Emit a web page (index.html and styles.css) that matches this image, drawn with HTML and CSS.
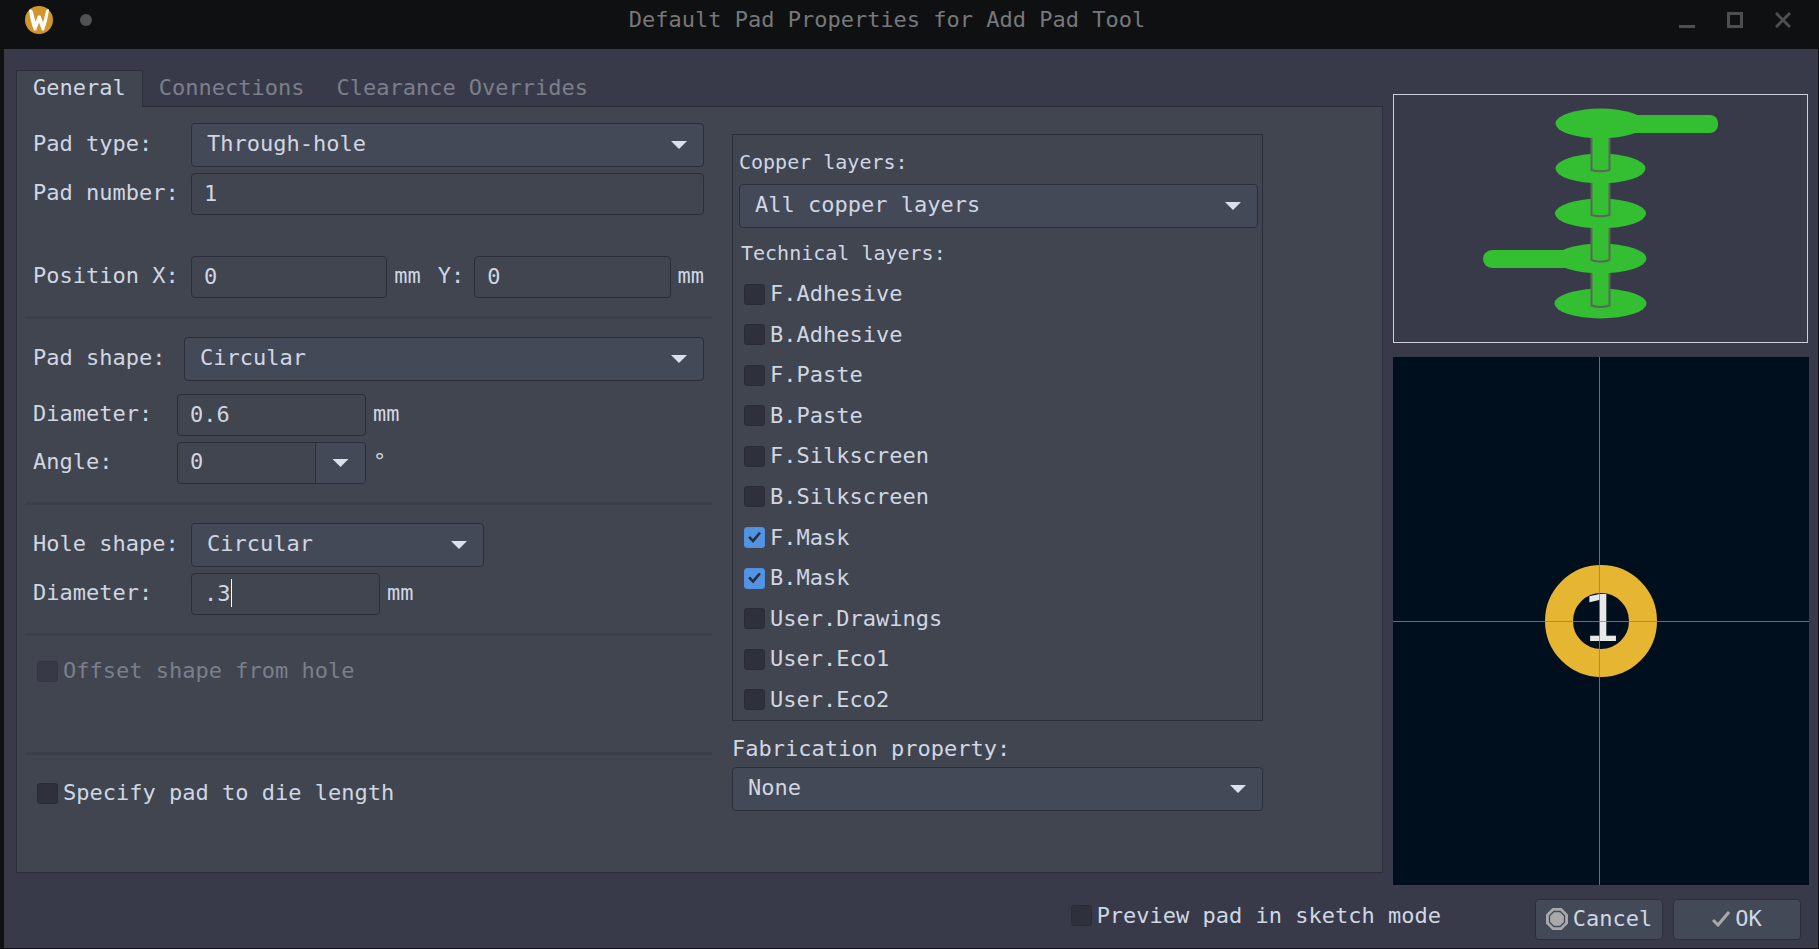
FILE: index.html
```html
<!DOCTYPE html>
<html lang="en">
<head>
<meta charset="utf-8">
<title>Default Pad Properties for Add Pad Tool</title>
<link rel="stylesheet" href="styles.css">
</head>
<body>
<header class="titlebar">
  <div class="titlebar-left">
    <svg class="logo" viewBox="0 0 28 28" aria-hidden="true"><circle cx="14" cy="14" r="14" fill="#d1962c"/><path d="M4 4C6 3 7.500 4 8 6L10.500 16L13 9.500H15.500L18 16.500L21 5C21.500 3.500 22.500 3 24 3.500C23 11 21.500 18 19 24.500H17L14 16.500L11 24.500H9C6.500 18 5 12 4 4Z" fill="#fff"/></svg>
    <span class="dot"></span>
  </div>
  <h1 class="title">Default Pad Properties for Add Pad Tool</h1>
  <div class="titlebar-right">
    <button class="win-btn" aria-label="Minimize"><svg viewBox="0 0 16 16"><path d="M0 14.500H16" stroke-width="3"/></svg></button>
    <button class="win-btn" aria-label="Maximize"><svg viewBox="0 0 16 16"><path d="M1.500 1.500H14.500V14.500H1.500Z" stroke-width="3"/></svg></button>
    <button class="win-btn" aria-label="Close"><svg viewBox="0 0 16 16"><path d="M1 1L15 15M15 1L1 15" stroke-width="3"/></svg></button>
  </div>
</header>

<main class="dialog">
  <div class="content">
    <div class="notebook">
      <div class="tabs" role="tablist">
        <button class="tab active" role="tab" aria-selected="true">General</button>
        <button class="tab" role="tab" aria-selected="false">Connections</button>
        <button class="tab" role="tab" aria-selected="false">Clearance Overrides</button>
      </div>
      <div class="panel">
        <form class="settings">
          <section class="group">
            <div class="row">
              <label class="label" for="pad-type">Pad type:</label>
              <div class="select grow"><select id="pad-type"><option>Through-hole</option></select></div>
            </div>
            <div class="row">
              <label class="label" for="pad-number">Pad number:</label>
              <input class="field grow" id="pad-number" type="text" value="1">
            </div>
            <div class="row position">
              <label class="label" for="pos-x">Position X:</label>
              <input class="field grow" id="pos-x" type="text" value="0">
              <span class="unit">mm</span>
              <label class="label-y" for="pos-y">Y:</label>
              <input class="field grow" id="pos-y" type="text" value="0">
              <span class="unit">mm</span>
            </div>
          </section>
          <section class="group">
            <div class="row shape">
              <label class="label medium" for="pad-shape">Pad shape:</label>
              <div class="select grow"><select id="pad-shape"><option>Circular</option></select></div>
            </div>
            <div class="row">
              <label class="label narrow" for="pad-diameter">Diameter:</label>
              <input class="field sized" id="pad-diameter" type="text" value="0.6">
              <span class="unit">mm</span>
            </div>
            <div class="row">
              <label class="label narrow" for="angle">Angle:</label>
              <div class="combo sized">
                <input id="angle" type="text" value="0">
                <button class="combo-btn" type="button" aria-label="Choose angle"></button>
              </div>
              <span class="unit">°</span>
            </div>
          </section>
          <section class="group">
            <div class="row">
              <label class="label" for="hole-shape">Hole shape:</label>
              <div class="select hole"><select id="hole-shape"><option>Circular</option></select></div>
            </div>
            <div class="row">
              <label class="label" for="hole-diameter">Diameter:</label>
              <div class="edit sized">
                <input class="field" id="hole-diameter" type="text" value=".3">
                <span class="caret"></span>
              </div>
              <span class="unit">mm</span>
            </div>
          </section>
          <section class="group offset">
            <label class="check disabled"><input type="checkbox" disabled>Offset shape from hole</label>
          </section>
          <section class="group die">
            <label class="check"><input type="checkbox">Specify pad to die length</label>
          </section>
        </form>

        <div class="layers-column">
          <div class="layers">
            <label class="caption" for="copper">Copper layers:</label>
            <div class="select"><select id="copper"><option>All copper layers</option></select></div>
            <p class="caption technical">Technical layers:</p>
            <div class="layer-list">
              <label class="check"><input type="checkbox">F.Adhesive</label>
              <label class="check"><input type="checkbox">B.Adhesive</label>
              <label class="check"><input type="checkbox">F.Paste</label>
              <label class="check"><input type="checkbox">B.Paste</label>
              <label class="check"><input type="checkbox">F.Silkscreen</label>
              <label class="check"><input type="checkbox">B.Silkscreen</label>
              <label class="check"><input type="checkbox" checked>F.Mask</label>
              <label class="check"><input type="checkbox" checked>B.Mask</label>
              <label class="check"><input type="checkbox">User.Drawings</label>
              <label class="check"><input type="checkbox">User.Eco1</label>
              <label class="check"><input type="checkbox">User.Eco2</label>
            </div>
          </div>
          <label class="fab-label" for="fab">Fabrication property:</label>
          <div class="select"><select id="fab"><option>None</option></select></div>
        </div>
      </div>
    </div>

    <aside class="previews">
      <div class="stack">
        <svg viewBox="0 0 413 247" aria-label="Through-hole pad connected on all copper layers">
          <g fill="#33bf31">
            <ellipse cx="206.500" cy="28.500" rx="45" ry="15"/>
            <rect x="206" y="20" width="118" height="18" rx="8"/>
            <ellipse cx="206.500" cy="73.500" rx="45" ry="15"/>
            <ellipse cx="206.500" cy="118.500" rx="45.500" ry="15"/>
            <ellipse cx="206.500" cy="163.500" rx="46" ry="15"/>
            <rect x="89" y="155" width="118" height="18" rx="9"/>
            <ellipse cx="206.500" cy="208.500" rx="46" ry="15"/>
          </g>
          <g fill="#33bf31" stroke="#5c6759" stroke-width="2">
            <path d="M197.500 43V75Q206.500 77.500 215.500 75V43"/>
            <path d="M197.500 88V120Q206.500 122.500 215.500 120V88"/>
            <path d="M197.500 133V165Q206.500 168.500 215.500 165V133"/>
            <path d="M197.500 178V210.500Q206.500 213.500 215.500 210.500V178"/>
          </g>
        </svg>
      </div>
      <div class="pad-view">
        <div class="pad">1</div>
      </div>
    </aside>
  </div>

  <footer class="footer">
    <label class="check"><input type="checkbox">Preview pad in sketch mode</label>
    <div class="actions">
      <button class="btn" type="button"><svg class="stop" viewBox="0 0 22 22" aria-hidden="true"><path d="M6.500 0H15.500L22 6.500V15.500L15.500 22H6.500L0 15.500V6.500Z" fill="#a9a9a9"/><path d="M7.800 3.500H14.200L18.500 7.800V14.200L14.200 18.500H7.800L3.500 14.200V7.800Z" fill="#a9a9a9" stroke="#444958" stroke-width="1.300"/></svg>Cancel</button>
      <button class="btn" type="button"><svg class="tick" viewBox="0 0 18 16" aria-hidden="true"><path d="M1 9L6 14L17 1" fill="none" stroke="#a9a9a9" stroke-width="3"/></svg>OK</button>
    </div>
  </footer>
</main>
</body>
</html>
```

FILE: styles.css
```css
:root {
  --window: #383a49;
  --page: #404550;
  --control: #444958;
  --edge: #2b2e3a;
  --text: #d0d6e2;
  --muted: #7b7f8b;
}

* { box-sizing: border-box; }

body {
  margin: 0;
  min-height: 100vh;
  display: flex;
  flex-direction: column;
  background: #0f1012;
  color: var(--text);
  font: 22px/26px "DejaVu Sans Mono", monospace;
}

button, input, select {
  font: inherit;
  color: inherit;
  margin: 0;
}

/* Title bar */
.titlebar {
  height: 49px;
  display: flex;
  padding-bottom: 9px;
  align-items: center;
}
.titlebar-left {
  width: 95px;
  display: flex;
  align-items: center;
  gap: 27px;
  padding-left: 25px;
}
.logo { width: 28px; height: 28px; }
.dot {
  width: 12px;
  height: 12px;
  border-radius: 50%;
  background: #515254;
}
.title {
  flex: 1;
  margin: 0;
  text-align: center;
  font-size: 22px;
  font-weight: 400;
  color: #77787a;
}
.titlebar-right {
  display: flex;
  gap: 32px;
  padding-right: 28px;
}
.win-btn {
  width: 16px;
  height: 16px;
  padding: 0;
  border: 0;
  background: none;
}
.win-btn svg {
  display: block;
  fill: none;
  stroke: #4e4f51;
}

/* Dialog */
.dialog {
  flex: 1;
  display: flex;
  flex-direction: column;
  margin: 0 1px 1px 4px;
  background: var(--window);
}
.content {
  flex: 1;
  display: grid;
  grid-template-columns: minmax(0, 1367fr) minmax(0, 416fr);
  gap: 10px;
  padding: 0 9px 0 12px;
}
.notebook {
  display: flex;
  flex-direction: column;
  padding: 21px 0 12px;
}
.tabs { display: flex; }
.tab {
  height: 37px;
  padding: 0 16px 2px;
  border: 0;
  background: none;
  color: var(--muted);
}
.tab.active {
  border: 1px solid var(--edge);
  border-bottom: 0;
  background: var(--page);
  color: var(--text);
  z-index: 1;
}
.panel {
  flex: 1;
  display: grid;
  grid-template-columns: minmax(0, 695fr) minmax(0, 531fr);
  gap: 20px;
  margin-top: -1px;
  padding-right: 119px;
  border: 1px solid var(--edge);
  background: var(--page);
}

/* Left column */
.settings {
  padding: 16px 0 0 8px;
}
.group {
  display: flex;
  flex-direction: column;
  gap: 6px;
  padding: 0 8px 18px;
}
.group + .group {
  border-top: 3px solid #3b3e4b;
  padding-top: 18px;
}
.row {
  display: flex;
  align-items: center;
}
.position { margin-top: 35px; }
.shape { margin-bottom: 7px; }
.label { width: 158px; padding-bottom: 2px; white-space: nowrap; }
.label.medium { width: 151px; }
.label.narrow { width: 144px; }
.unit { margin-left: 7px; padding-bottom: 2px; }
.label-y { margin: 0 10px 0 17px; padding-bottom: 2px; }
.grow { flex: 1; }
.sized { width: 189px; }
.hole { width: 293px; }

.field {
  height: 42px;
  min-width: 0;
  padding: 0 12px 2px;
  border: 1px solid var(--edge);
  border-radius: 4px;
  background: var(--page);
}
input:focus, select:focus { outline: none; }

.select {
  position: relative;
  height: 44px;
}
.select select {
  display: block;
  width: 100%;
  height: 100%;
  padding: 0 40px 2px 15px;
  appearance: none;
  border: 1px solid var(--edge);
  border-radius: 4px;
  background: var(--control);
}
.select::after, .combo-btn::after {
  content: "";
  width: 16px;
  height: 8px;
  background: #dbe1ea;
  clip-path: polygon(0 0, 100% 0, 50% 100%);
}
.select::after {
  position: absolute;
  right: 17px;
  top: 18px;
  pointer-events: none;
}

.combo {
  display: flex;
  height: 42px;
  border: 1px solid var(--edge);
  border-radius: 4px;
  overflow: hidden;
}
.combo input {
  flex: 1;
  min-width: 0;
  padding: 0 12px 2px;
  border: 0;
  background: none;
}
.combo-btn {
  width: 50px;
  display: flex;
  align-items: center;
  justify-content: center;
  padding: 0;
  border: 0;
  border-left: 1px solid var(--edge);
  background: var(--control);
}
.edit { position: relative; }
.edit .field { display: block; width: 100%; }
.caret {
  position: absolute;
  left: 40px;
  top: 6px;
  width: 1px;
  height: 28px;
  background: #fff;
}

.check {
  display: flex;
  align-items: center;
  gap: 5px;
}
.check input {
  appearance: none;
  width: 21px;
  height: 21px;
  flex: none;
  border: 1px solid #292c36;
  border-radius: 3px;
  background: #2e313c;
}
.check input:checked {
  display: grid;
  place-items: center;
  border-color: #4f8fdd;
  background: #5294e2;
}
.check input:checked::after {
  content: "";
  width: 13px;
  height: 11px;
  background: #2b2e39;
  clip-path: polygon(0 50%, 18% 38%, 38% 64%, 84% 0, 100% 12%, 40% 100%);
}
.check.disabled { color: var(--muted); }
.check.disabled input { border-color: #343743; background: #373a46; }
.group.offset { padding: 22px 12px 68px; }
.group.die { padding: 25px 12px 0; }

/* Right column */
.layers-column {
  display: flex;
  flex-direction: column;
  padding: 27px 0 61px;
}
.layers {
  flex: 1;
  display: flex;
  flex-direction: column;
  padding: 14px 4px 0 6px;
  border: 1px solid var(--edge);
}
.caption { margin: 0 0 9px; font-size: 20px; }
.caption.technical { margin: 12px 2px 8px; }
.layer-list {
  flex: 1;
  display: grid;
  grid-auto-rows: 1fr;
  padding-left: 5px;
}
.fab-label { margin: 15px 0 5px; }

/* Previews */
.previews {
  display: flex;
  flex-direction: column;
  gap: 14px;
  padding-top: 45px;
}
.stack {
  margin-right: 1px;
  border: 1px solid #c9cfdb;
}
.stack svg { display: block; width: 100%; }
.pad-view {
  flex: 1;
  display: grid;
  place-items: center;
  position: relative;
  background: #000f1e;
}
.pad-view::before, .pad-view::after {
  content: "";
  position: absolute;
  z-index: 1;
  background: #7f8788;
  opacity: 0.8;
}
.pad-view::before { left: 0; right: 0; top: 50%; height: 1px; }
.pad-view::after { top: 0; bottom: 0; left: 50%; width: 1px; margin-left: -2px; }
.pad {
  width: 112px;
  height: 112px;
  display: flex;
  align-items: center;
  justify-content: center;
  border: 28px solid #e6b632;
  border-radius: 50%;
  color: #e8e8e8;
  font-size: 64px;
  line-height: 56px;
  padding-bottom: 4px;
}

/* Footer */
.footer {
  display: flex;
  align-items: center;
  justify-content: flex-end;
  gap: 94px;
  padding: 14px 17px 8px;
}
.footer .check { padding-bottom: 8px; }
.actions {
  display: grid;
  grid-template-columns: 128px 128px;
  gap: 10px;
}
.btn {
  height: 41px;
  display: flex;
  align-items: center;
  justify-content: center;
  gap: 5px;
  padding: 0 0 2px;
  border: 1px solid var(--edge);
  border-radius: 4px;
  background: var(--control);
}
.stop { width: 22px; height: 22px; }
.tick { width: 18px; height: 16px; }
```
